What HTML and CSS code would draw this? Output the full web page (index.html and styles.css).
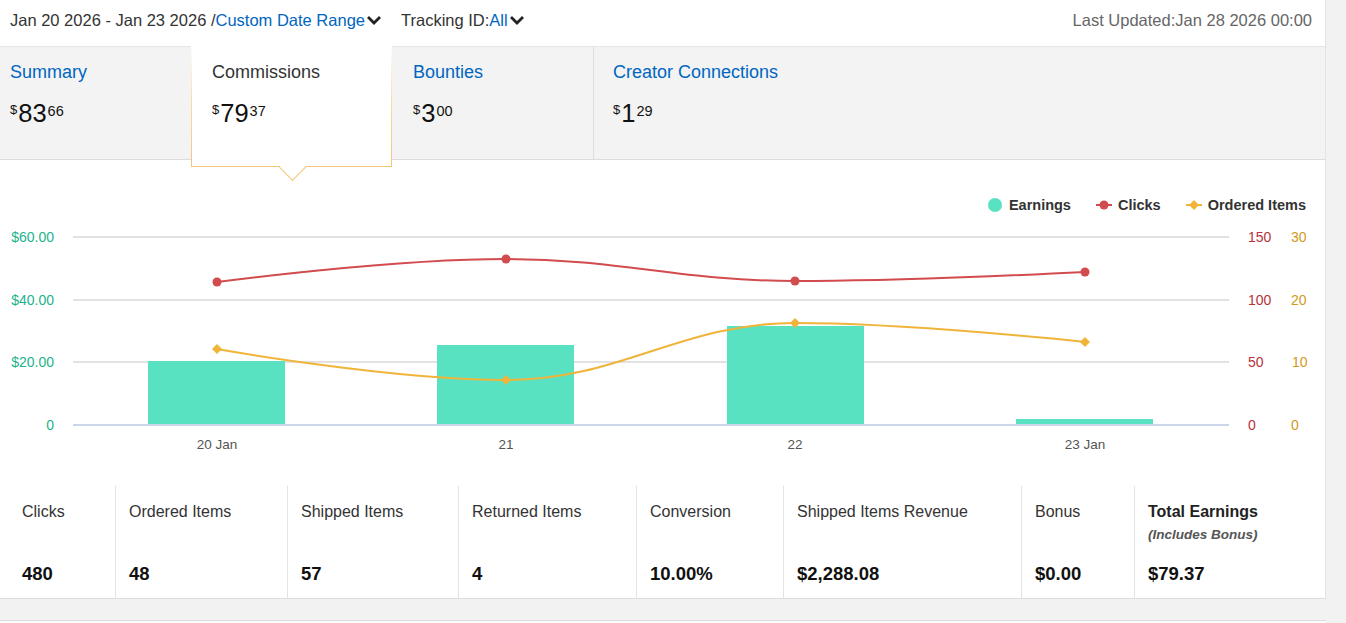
FILE: index.html
```html
<!DOCTYPE html>
<html>
<head>
<meta charset="utf-8">
<title>Earnings Report</title>
<link rel="stylesheet" href="styles.css">
</head>
<body>
<div class="report">
  <div class="toolbar">
    <div class="filters">
      <span class="filter">Jan 20 2026 - Jan 23 2026 /<a class="pick">Custom Date Range</a><svg class="chev" viewBox="0 0 16 10" width="16" height="10"><path d="M2 2 L8 8 L14 2" /></svg></span>
      <span class="filter">Tracking ID:<a class="pick">All</a><svg class="chev" viewBox="0 0 16 10" width="16" height="10"><path d="M2 2 L8 8 L14 2" /></svg></span>
    </div>
    <div class="updated">Last Updated:Jan 28 2026 00:00</div>
  </div>

  <div class="tabs">
    <div class="tab first">
      <a class="tab-title">Summary</a>
      <div class="amount"><span class="cur">$</span><span class="whole">83</span><span class="frac">66</span></div>
    </div>
    <div class="tab active">
      <span class="tab-title">Commissions</span>
      <div class="amount"><span class="cur">$</span><span class="whole">79</span><span class="frac">37</span></div>
    </div>
    <div class="tab">
      <a class="tab-title">Bounties</a>
      <div class="amount"><span class="cur">$</span><span class="whole">3</span><span class="frac">00</span></div>
    </div>
    <div class="tab wide">
      <a class="tab-title">Creator Connections</a>
      <div class="amount"><span class="cur">$</span><span class="whole">1</span><span class="frac">29</span></div>
    </div>
  </div>

  <div class="chart">
    <div class="legend">
      <span class="key"><svg width="16" height="16" viewBox="0 0 16 16"><circle cx="8" cy="8" r="7" fill="#58e2c2" /></svg>Earnings</span>
      <span class="key"><svg width="16" height="10" viewBox="0 0 16 10"><line x1="0" y1="5" x2="16" y2="5" stroke="#d24b4e" stroke-width="2" /><circle cx="8" cy="5" r="4.5" fill="#d24b4e" /></svg>Clicks</span>
      <span class="key"><svg width="16" height="12" viewBox="0 0 16 12"><line x1="0" y1="6" x2="16" y2="6" stroke="#f0b43a" stroke-width="2" /><path d="M8 1 L13 6 L8 11 L3 6 Z" fill="#f0b43a" /></svg>Ordered Items</span>
    </div>
    <svg class="plot" width="1326" height="269" viewBox="0 216 1326 269">
      <!-- grid -->
      <g stroke="#e2e2e2" stroke-width="2">
        <line x1="73" y1="237" x2="1229" y2="237" />
        <line x1="73" y1="300" x2="1229" y2="300" />
        <line x1="73" y1="362" x2="1229" y2="362" />
      </g>
      <!-- earnings bars -->
      <g fill="#58e2c2">
        <rect x="148" y="361" width="137" height="64" />
        <rect x="437" y="345" width="137" height="80" />
        <rect x="727" y="326" width="137" height="99" />
        <rect x="1016" y="419" width="137" height="6" />
      </g>
      <line x1="73" y1="425" x2="1229" y2="425" stroke="#ccd6eb" stroke-width="2" />

      <!-- clicks -->
      <path d="M217 282 C217 282 390.4 259 506 259 C621.6 259 679.4 281 795 281 C911 281 1085 272 1085 272" fill="none" stroke="#d24b4e" stroke-width="2" />
      <g fill="#d24b4e">
        <circle cx="217" cy="282" r="4.5" />
        <circle cx="506" cy="259" r="4.5" />
        <circle cx="795" cy="281" r="4.5" />
        <circle cx="1085" cy="272" r="4.5" />
      </g>

      <!-- ordered items -->
      <path d="M217 349 C217 349 390.4 380 506 380 C621.6 380 679.4 323 795 323 C911 323 1085 342 1085 342" fill="none" stroke="#f0b43a" stroke-width="2" />
      <g fill="#f0b43a">
        <path d="M217 344 L222 349 L217 354 L212 349 Z" />
        <path d="M506 375 L511 380 L506 385 L501 380 Z" />
        <path d="M795 318 L800 323 L795 328 L790 323 Z" />
        <path d="M1085 337 L1090 342 L1085 347 L1080 342 Z" />
      </g>

      <!-- axes -->
      <g class="ax-left" text-anchor="end">
        <text x="54" y="237">$60.00</text>
        <text x="54" y="300">$40.00</text>
        <text x="54" y="362">$20.00</text>
        <text x="54" y="425">0</text>
      </g>
      <g class="ax-clicks">
        <text x="1248" y="237">150</text>
        <text x="1248" y="300">100</text>
        <text x="1248" y="362">50</text>
        <text x="1248" y="425">0</text>
      </g>
      <g class="ax-items">
        <text x="1291" y="237">30</text>
        <text x="1291" y="300">20</text>
        <text x="1292" y="362">10</text>
        <text x="1291" y="425">0</text>
      </g>
      <g class="ax-bottom" text-anchor="middle">
        <text x="217" y="444">20 Jan</text>
        <text x="506" y="444">21</text>
        <text x="795" y="444">22</text>
        <text x="1085" y="444">23 Jan</text>
      </g>
    </svg>
  </div>

  <div class="stats">
    <div class="stat first"><div class="stat-label">Clicks</div><div class="stat-value">480</div></div>
    <div class="stat"><div class="stat-label">Ordered Items</div><div class="stat-value">48</div></div>
    <div class="stat"><div class="stat-label">Shipped Items</div><div class="stat-value">57</div></div>
    <div class="stat"><div class="stat-label">Returned Items</div><div class="stat-value">4</div></div>
    <div class="stat"><div class="stat-label">Conversion</div><div class="stat-value">10.00%</div></div>
    <div class="stat"><div class="stat-label">Shipped Items Revenue</div><div class="stat-value">$2,288.08</div></div>
    <div class="stat"><div class="stat-label">Bonus</div><div class="stat-value">$0.00</div></div>
    <div class="stat"><div class="stat-label"><b>Total Earnings</b><i>(Includes Bonus)</i></div><div class="stat-value">$79.37</div></div>
  </div>
</div>
<div class="next-panel"></div>
</body>
</html>
```

FILE: styles.css
```css
body {
  margin: 0;
  background: #f2f2f2;
  font-family: "Liberation Sans", Arial, sans-serif;
  color: #333;
  overflow: hidden;
}

a {
  color: #0066c0;
  text-decoration: none;
}

.report {
  width: 1326px;
  background: #fff;
  border-right: 1px solid #e4e4e4;
  box-sizing: border-box;
}

/* top filter bar */
.toolbar {
  height: 46px;
  box-sizing: border-box;
  padding: 10px 13px 0 10px;
  display: flex;
  align-items: flex-start;
  justify-content: space-between;
  font-size: 16.5px;
  line-height: 20px;
}

.filters {
  display: flex;
  gap: 19px;
}

.filter {
  display: flex;
  align-items: center;
  color: #333;
}

.chev {
  margin-left: 1px;
  fill: none;
  stroke: #222;
  stroke-width: 2.8;
}

.updated {
  color: #666;
}

/* value tabs */
.tabs {
  display: flex;
  height: 114px;
  box-sizing: border-box;
  background: #f3f3f3;
  border-top: 1px solid #e6e6e6;
  border-bottom: 1px solid #dcdcdc;
}

.tab {
  width: 201px;
  box-sizing: border-box;
  padding: 15px 20px 0 21px;
}

.tab.first {
  width: 191px;
  padding-left: 10px;
}

.tab.wide {
  width: 260px;
  border-left: 1px solid #dedede;
  padding-left: 19px;
}

.tab-title {
  display: block;
  font-size: 18px;
  line-height: 20px;
}

.tab.active {
  position: relative;
  z-index: 1;
  align-self: flex-start;
  margin-top: -1px;
  height: 121px;
  background: #fff;
  border: 1px solid;
  border-image: linear-gradient(#fff 0%, #f8dcaa 45%, #f4c675 100%) 1;
  padding-left: 20px;
  padding-top: 15px;
}

.tab.active .tab-title {
  color: #333;
}

.tab.active::after {
  content: "";
  position: absolute;
  left: 50%;
  bottom: -11px;
  width: 18px;
  height: 18px;
  margin-left: -9px;
  background: #fff;
  border-right: 1px solid #f4c675;
  border-bottom: 1px solid #f4c675;
  transform: rotate(45deg);
}

.amount {
  display: flex;
  align-items: flex-start;
  margin-top: 19px;
  color: #111;
  line-height: 1;
}

.cur {
  font-size: 13px;
  margin-top: 2px;
}

.whole {
  font-size: 25.5px;
  margin: 0 1px 0 1px;
}

.frac {
  font-size: 14.5px;
  margin-top: 3px;
}

/* chart */
.chart {
  height: 325px;
}

.legend {
  height: 56px;
  box-sizing: border-box;
  padding: 33px 19px 0 0;
  display: flex;
  justify-content: flex-end;
  gap: 25px;
  font-size: 14.5px;
  font-weight: bold;
  line-height: 16px;
  color: #333;
}

.key {
  display: flex;
  align-items: center;
  gap: 6px;
}

.plot {
  display: block;
}

.plot text {
  font-family: "Liberation Sans", Arial, sans-serif;
  font-size: 14px;
  dominant-baseline: central;
}

.ax-left {
  fill: #22b38c;
}

.ax-clicks {
  fill: #b8323a;
}

.ax-items {
  fill: #d09a1c;
}

.plot .ax-bottom text {
  fill: #555;
  font-size: 13.5px;
}

/* totals row */
.stats {
  display: grid;
  grid-template-columns: 115px 172px 171px 178px 147px 238px 113px 1fr;
  height: 113px;
  border-bottom: 1px solid #dcdcdc;
}

.stat {
  border-left: 1px solid #e3e3e3;
  padding: 0 10px 0 13px;
  margin-top: 1px;
}

.stat.first {
  border-left: 0;
  padding-left: 22px;
}

.stat-label {
  height: 78px;
  padding-top: 17px;
  box-sizing: border-box;
  font-size: 16px;
  line-height: 18px;
}

.stat-label b {
  display: block;
  color: #222;
}

.stat-label i {
  display: block;
  margin-top: 5px;
  font-size: 13.5px;
  font-weight: bold;
  color: #555;
}

.stat-value {
  font-size: 18.5px;
  font-weight: bold;
  line-height: 20px;
  color: #111;
}

.next-panel {
  width: 1326px;
  height: 40px;
  margin-top: 21px;
  background: #fff;
  border-top: 1px solid #dcdcdc;
  box-sizing: border-box;
}
```
